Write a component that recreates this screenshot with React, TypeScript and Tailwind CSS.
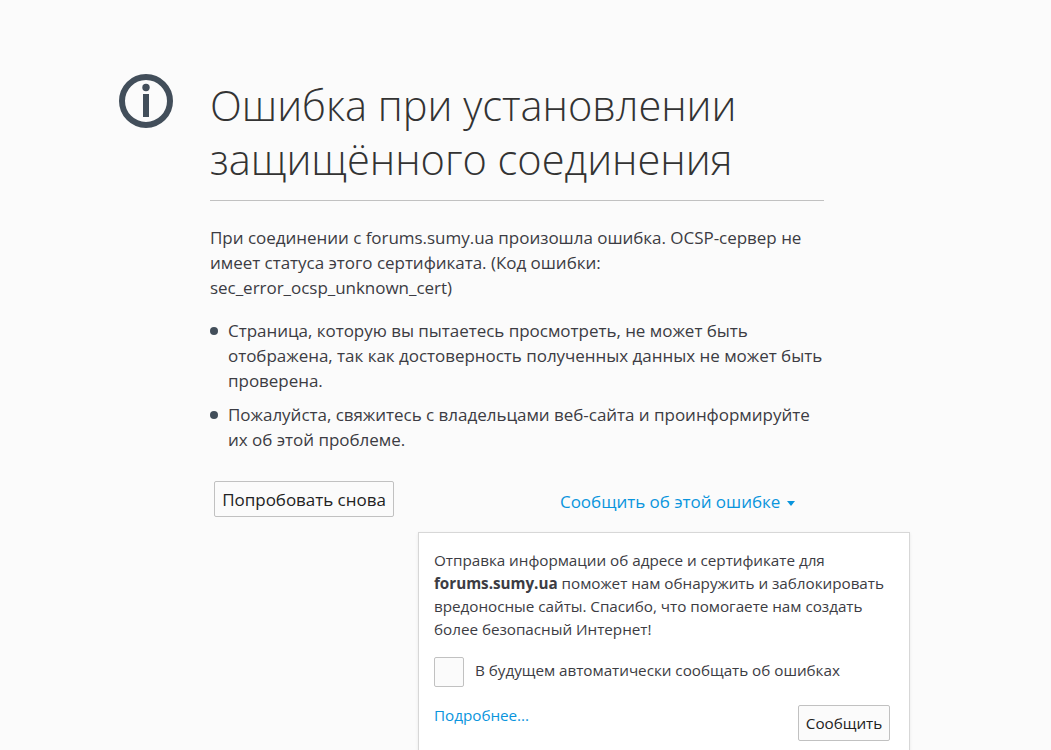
import React from "react"

const font = "font-['Open_Sans','Noto_Sans',sans-serif]"

function InfoIcon() {
  return (
    <svg width="54" height="54" viewBox="0 0 54 54" className="block">
      <circle cx="27" cy="27" r="24" fill="none" stroke="#424e5a" strokeWidth="6" />
      <circle cx="27" cy="13.5" r="3.7" fill="#424e5a" />
      <rect x="24" y="20" width="6" height="23" fill="#424e5a" />
    </svg>
  )
}

export default function App() {
  return (
    <div className={`h-[750px] w-[1051px] overflow-hidden bg-[#fbfbfb] text-[17px] leading-[25px] tracking-[-0.03px] text-[#3c3c43] ${font}`}>
      <div className="flex pl-[119px] pt-[74px]">
        <div className="w-[91px] shrink-0">
          <InfoIcon />
        </div>
        <div className="w-[614px]">
          <h1 className="border-b border-[#c1c1c1] pb-[14px] pt-[4px] text-[41.6px] font-light leading-[54px] text-[#333]">
            Ошибка при установлении защищённого соединения
          </h1>
          <p className="mt-[24px]">
            При соединении с forums.sumy.ua произошла ошибка. OCSP-сервер не имеет статуса этого сертификата. (Код ошибки: sec_error_ocsp_unknown_cert)
          </p>
          <ul className="mt-[18px] space-y-[9px]">
            <li className="flex">
              <span className="mr-[10px] mt-[9px] size-[8px] shrink-0 rounded-full bg-[#424e5a]" />
              <span>Страница, которую вы пытаетесь просмотреть, не может быть отображена, так как достоверность полученных данных не может быть проверена.</span>
            </li>
            <li className="flex">
              <span className="mr-[10px] mt-[9px] size-[8px] shrink-0 rounded-full bg-[#424e5a]" />
              <span>Пожалуйста, свяжитесь с владельцами веб-сайта и проинформируйте их об этой проблеме.</span>
            </li>
          </ul>
          <div className="mt-[29px] flex items-start">
            <button className="ml-[4px] h-[36px] w-[180px] rounded-[2px] border border-[#c1c1c1] bg-[#fbfbfb] text-[#222]">
              Попробовать снова
            </button>
            <a className="ml-[166px] mt-[8px] flex items-center text-[#0a95dd]">
              Сообщить об этой ошибке
              <span className="ml-[7px] mt-[3px] size-0 border-x-[4px] border-t-[5px] border-x-transparent border-t-[#0a95dd]" />
            </a>
          </div>
          <div className="ml-[208px] mt-[15px] h-[300px] w-[492px] border border-[#d7d7d7] bg-white px-[15px] pt-[16px] text-[15.25px] leading-[23px] shadow-[0_1px_3px_rgba(0,0,0,0.08)]">
            <p>
              Отправка информации об адресе и сертификате для <b>forums.sumy.ua</b> поможет нам обнаружить и заблокировать вредоносные сайты. Спасибо, что помогаете нам создать более безопасный Интернет!
            </p>
            <label className="mt-[16px] flex items-center">
              <span className="size-[30px] rounded-[2px] border border-[#c1c1c1] bg-[#fbfbfb]" />
              <span className="mb-[3px] ml-[11px]">В будущем автоматически сообщать об ошибках</span>
            </label>
            <div className="mt-[17px] flex items-start justify-between pr-[4px]">
              <a className="text-[#0a95dd]">Подробнее...</a>
              <button className="mt-[1px] h-[36px] w-[92px] rounded-[2px] border border-[#c1c1c1] bg-[#fbfbfb] text-[#222]">
                Сообщить
              </button>
            </div>
          </div>
        </div>
      </div>
    </div>
  )
}
